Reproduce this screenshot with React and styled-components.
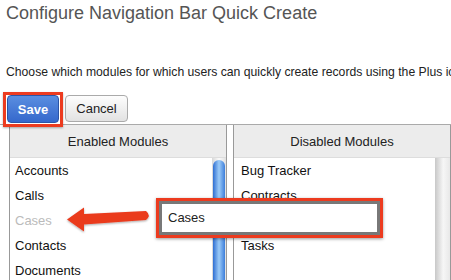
import styled, { createGlobalStyle } from "styled-components"

const GlobalStyle = createGlobalStyle`
body {
  margin: 0;
  background: #fff;
  font-family: "Liberation Sans", Arial, sans-serif;
  overflow: hidden;
}
`

const enabled = [
  { name: "Accounts" },
  { name: "Calls" },
  { name: "Cases", ghost: true },
  { name: "Contacts" },
  { name: "Documents" },
]

const disabled = ["Bug Tracker", "Contracts", "", "Tasks"]

const App = () => {
  return (
    <Page>
      <GlobalStyle />
      <Title>Configure Navigation Bar Quick Create</Title>
      <Description>
        Choose which modules for which users can quickly create records using the Plus icon
      </Description>
      <Toolbar>
        <Highlight>
          <SaveButton>Save</SaveButton>
        </Highlight>
        <CancelButton>Cancel</CancelButton>
      </Toolbar>
      <Panels>
        <Panel>
          <PanelHeader>Enabled Modules</PanelHeader>
          <PanelBody>
            <List>
              {enabled.map((m) => (
                <Item key={m.name} $ghost={m.ghost}>{m.name}</Item>
              ))}
            </List>
            <Track>
              <Thumb />
            </Track>
          </PanelBody>
        </Panel>
        <Panel>
          <PanelHeader>Disabled Modules</PanelHeader>
          <PanelBody>
            <List $indent={7}>
              {disabled.map((m, i) => (
                <Item key={i}>{m}</Item>
              ))}
            </List>
            <EmptyTrack />
          </PanelBody>
        </Panel>
      </Panels>

      <Arrow width="90" height="34" viewBox="62 203 90 34">
        <defs>
          <filter id="sh" x="-10%" y="-20%" width="130%" height="150%">
            <feDropShadow dx="0" dy="1" stdDeviation="1" floodColor="#000" floodOpacity="0.35" />
          </filter>
        </defs>
        <path
          d="M67,219.5 L84,207.5 L84,214 L146,211 Q151.5,215.5 146,220 L84,224.5 L84,231.5 Z"
          fill="#ea3a1f"
          filter="url(#sh)"
        />
      </Arrow>
      <DragItem>
        <DragInner>Cases</DragInner>
      </DragItem>
    </Page>
  )
}

const Page = styled.div`
position: relative;
width: 451px;
height: 280px;
overflow: hidden;
`

const Title = styled.h1`
margin: 0;
padding: 2px 0 0 6px;
font-size: 18px;
line-height: 22px;
font-weight: normal;
color: #555;
`

const Description = styled.p`
margin: 40px 0 0;
padding-left: 6px;
font-size: 12.2px;
line-height: 16px;
color: #222;
white-space: nowrap;
`

const Toolbar = styled.div`
display: flex;
gap: 6px;
padding-left: 7px;
margin-top: 15px;
align-items: flex-start;
`

const Highlight = styled.div`
position: relative;
z-index: 2;
display: flex;
&::after {
  content: "";
  position: absolute;
  left: -4px;
  top: -3px;
  right: -4px;
  bottom: -4px;
  border: 3px solid #ec3b1f;
  box-shadow: 0 1px 2px rgba(0, 0, 0, 0.3);
  pointer-events: none;
}
`

const SaveButton = styled.button`
width: 52px;
height: 28px;
padding: 0;
border: 1px solid #2a55a8;
border-radius: 4px;
background: linear-gradient(#5a8ee0, #3568cc);
color: #fff;
font-family: "Liberation Sans", Arial, sans-serif;
font-weight: bold;
font-size: 13px;
`

const CancelButton = styled.button`
width: 63px;
height: 27px;
padding: 0;
border: 1px solid #aaa;
border-radius: 4px;
background: linear-gradient(#fdfdfd, #e2e2e2);
color: #222;
font-family: "Liberation Sans", Arial, sans-serif;
font-size: 13px;
`

const Panels = styled.div`
display: flex;
gap: 6px;
margin-top: 1px;
padding-left: 9px;
border-top: 1px solid #aaa;
`

const Panel = styled.div`
width: 216px;
height: 160px;
border-left: 1px solid #999;
border-right: 1px solid #999;
display: flex;
flex-direction: column;
`

const PanelHeader = styled.div`
height: 32px;
line-height: 33px;
background: #ececec;
border-bottom: 1px solid #ddd;
text-align: center;
font-size: 13px;
color: #222;
`

const PanelBody = styled.div`
display: flex;
flex: 1;
`

const List = styled.div`
flex: 1;
padding-left: ${(p) => p.$indent || 5}px;
`

const Item = styled.div`
height: 25px;
line-height: 25px;
font-size: 13px;
color: ${(p) => (p.$ghost ? "#bbb" : "#111")};
`

const Track = styled.div`
width: 14px;
background: linear-gradient(to right, #d8d8d8, #fafafa 50%, #e0e0e0);
padding-top: 2px;
`

const Thumb = styled.div`
margin: 0 1px;
height: 140px;
border-radius: 6px 6px 0 0;
background: linear-gradient(to right, #2f6fd3, #9ccbf7 50%, #3d7edb);
`

const EmptyTrack = styled.div`
width: 15px;
background: linear-gradient(to right, #c8c8c8, #f6f6f6 55%, #e8e8e8);
`

const Arrow = styled.svg`
position: absolute;
left: 62px;
top: 203px;
`

const DragItem = styled.div`
position: absolute;
left: 156px;
top: 198px;
width: 221px;
height: 34px;
border: 3px solid #ec3b1f;
box-shadow: 0 1px 3px rgba(0, 0, 0, 0.4);
background: #fff;
`

const DragInner = styled.div`
height: 100%;
box-sizing: border-box;
border: 3px solid #787878;
padding-left: 6px;
line-height: 27px;
font-size: 13px;
color: #222;
background: #fff;
`

export default App
